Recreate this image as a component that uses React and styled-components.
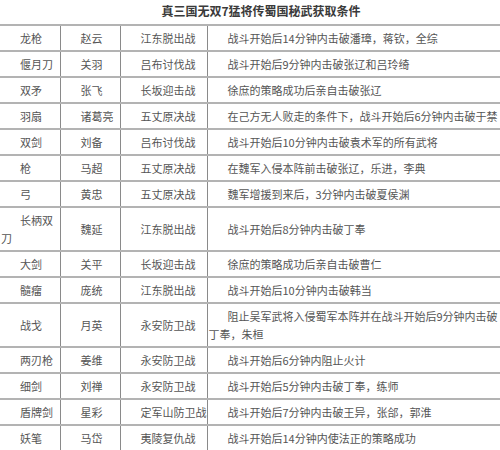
import React from 'react'
import styled, { createGlobalStyle } from 'styled-components'

const columns = [60, 60, 87, 293]

const rows = [
    ['龙枪', '赵云', '江东脱出战', '战斗开始后14分钟内击破潘璋，蒋钦，全综'],
    ['偃月刀', '关羽', '吕布讨伐战', '战斗开始后9分钟内击破张辽和吕玲绮'],
    ['双矛', '张飞', '长坂迎击战', '徐庶的策略成功后亲自击破张辽'],
    ['羽扇', '诸葛亮', '五丈原决战', '在己方无人败走的条件下，战斗开始后6分钟内击破于禁', true],
    ['双剑', '刘备', '吕布讨伐战', '战斗开始后10分钟内击破袁术军的所有武将'],
    ['枪', '马超', '五丈原决战', '在魏军入侵本阵前击破张辽，乐进，李典'],
    ['弓', '黄忠', '五丈原决战', '魏军增援到来后，3分钟内击破夏侯渊'],
    ['长柄双刀', '魏延', '江东脱出战', '战斗开始后8分钟内击破丁奉'],
    ['大剑', '关平', '长坂迎击战', '徐庶的策略成功后亲自击破曹仁'],
    ['髓瘤', '庞统', '江东脱出战', '战斗开始后10分钟内击破韩当'],
    ['战戈', '月英', '永安防卫战', '阻止吴军武将入侵蜀军本阵并在战斗开始后9分钟内击破丁奉，朱桓'],
    ['两刃枪', '姜维', '永安防卫战', '战斗开始后6分钟内阻止火计'],
    ['细剑', '刘禅', '永安防卫战', '战斗开始后5分钟内击破丁奉，练师'],
    ['盾牌剑', '星彩', '定军山防卫战', '战斗开始后7分钟内击破王异，张郃，郭淮'],
    ['妖笔', '马岱', '夷陵复仇战', '战斗开始后14分钟内使法正的策略成功'],
]

function App() {
    return (
        <>
            <GlobalStyle />
            <Page>
                <Title>真三国无双7猛将传蜀国秘武获取条件</Title>
                <Table>
                    <colgroup>
                        {columns.map((w, i) => <Col key={i} $w={w} />)}
                    </colgroup>
                    <tbody>
                        {rows.map((row) => (
                            <tr key={row[0]}>
                                <Cell>{row[0]}</Cell>
                                <Cell>{row[1]}</Cell>
                                <Cell $nowrap>{row[2]}</Cell>
                                <Cell $nowrap={row[4]}>{row[3]}</Cell>
                            </tr>
                        ))}
                    </tbody>
                </Table>
            </Page>
        </>
    )
}

const GlobalStyle = createGlobalStyle`
    body {
        margin: 0;
        background: #ffffff;
        font-family: "Noto Sans CJK SC", "Noto Sans", sans-serif;
    }
`

const Page = styled.div`
    width: 500px;
    height: 450px;
    overflow: hidden;
`

const Title = styled.div`
    height: 24px;
    line-height: 22px;
    text-align: center;
    text-indent: 22px;
    font-size: 12px;
    font-weight: bold;
    color: #3a3a3a;
`

const Table = styled.table`
    width: 500px;
    table-layout: fixed;
    border-collapse: collapse;
`

const Col = styled.col`
    width: ${props => props.$w}px;
`

const Cell = styled.td`
    padding: 3px 0 3px 1px;
    text-indent: 19px;
    font-size: 11px;
    line-height: 18px;
    color: #555555;
    vertical-align: middle;
    border-top: 2px solid #b3b3b3;
    border-bottom: 2px solid #b3b3b3;
    border-right: 1px solid #8a8a8a;
    white-space: ${props => props.$nowrap ? 'nowrap' : 'normal'};
    overflow: hidden;
    word-break: break-all;
`

export default App
